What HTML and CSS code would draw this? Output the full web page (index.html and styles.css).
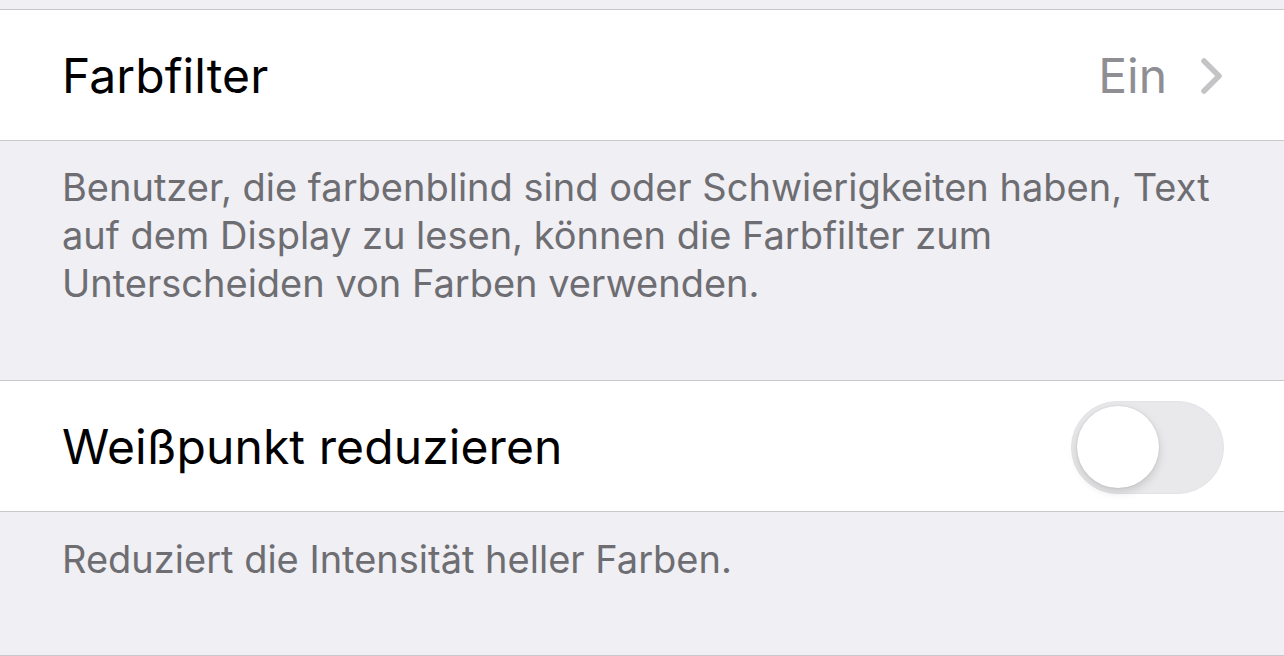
FILE: index.html
```html
<!DOCTYPE html>
<html lang="de">

<head>
  <meta charset="UTF-8">
  <meta name="viewport" content="width=device-width, initial-scale=1.0">
  <title>Display &amp; Textgröße</title>
  <link rel="stylesheet" href="styles.css">
</head>

<body>
  <div class="top"></div>

  <div class="group">
    <div class="cell">
      <span class="label">Farbfilter</span>
      <span class="value">Ein</span>
      <svg class="chevron" width="24" height="38" viewBox="0 0 24 38">
        <polyline points="4,4 19,19 4,34" fill="none" stroke="#c4c4c7" stroke-width="5.5" stroke-linecap="round" stroke-linejoin="round" />
      </svg>
    </div>
  </div>
  <p class="footer footer-first">Benutzer, die farbenblind sind oder Schwierigkeiten haben, Text auf dem Display zu lesen, können die Farbfilter zum Unterscheiden von Farben verwenden.</p>

  <div class="group">
    <div class="cell">
      <span class="label">Weißpunkt reduzieren</span>
      <div class="switch">
        <div class="knob"></div>
      </div>
    </div>
  </div>
  <p class="footer footer-last">Reduziert die Intensität heller Farben.</p>
  <div class="group end"></div>
</body>

</html>
```

FILE: styles.css
```css
body {
  margin: 0;
  font-family: Inter, "Noto Sans", sans-serif;
  background-color: #efeff4;
  overflow: hidden;
}

.top {
  height: 9px;
}

.group {
  background-color: #fff;
  border-top: 1px solid #c8c7cc;
  border-bottom: 1px solid #c8c7cc;
}

.group.end {
  border-bottom: none;
}

.cell {
  display: flex;
  align-items: center;
  height: 130px;
  padding: 0 60px 0 62px;
}

.label {
  flex: 1;
  font-size: 48px;
  letter-spacing: 0.1px;
  color: #000;
}

.value {
  font-size: 48px;
  color: #8e8e93;
  margin-right: 33px;
}

.chevron {
  display: block;
  margin-top: 2px;
}

.switch {
  width: 153px;
  height: 93px;
  border-radius: 47px;
  background-color: #e9e9eb;
  border: 1px solid #e3e3e6;
  padding: 4.5px 5px;
  box-sizing: border-box;
  margin-top: 2px;
}

.knob {
  width: 82px;
  height: 82px;
  border-radius: 50%;
  background-color: #fff;
  box-shadow: 0 4px 10px rgba(0, 0, 0, 0.15), 0 0 2px rgba(0, 0, 0, 0.12);
}

.footer {
  margin: 0;
  padding: 22px 60px 0 62px;
  font-size: 38px;
  line-height: 48px;
  color: #6d6d72;
  box-sizing: border-box;
}

.footer-first {
  height: 239px;
  padding-right: 50px;
}

.footer-last {
  height: 143px;
  padding-top: 23px;
}
```
